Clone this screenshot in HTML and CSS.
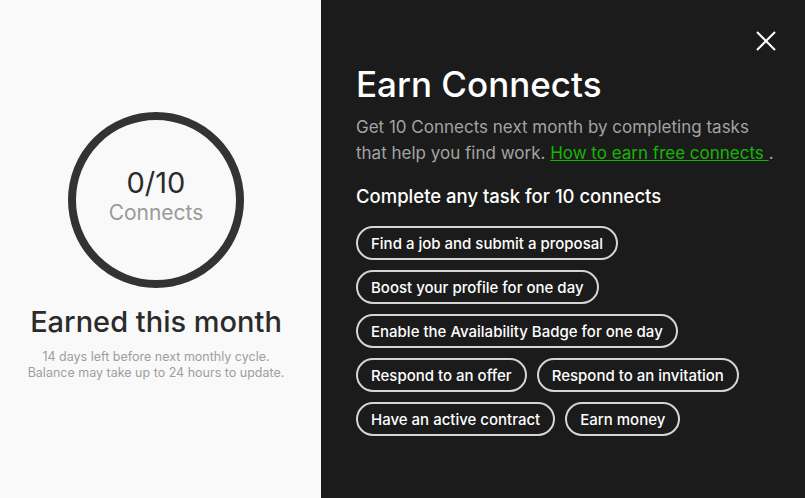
FILE: index.html
```html
<!DOCTYPE html>
<html lang="en">
<head>
<meta charset="utf-8">
<title>Earn Connects</title>
<link rel="stylesheet" href="styles.css">
</head>
<body>
<div class="modal">
  <section class="summary">
    <div class="ring">
      <span class="ring-count">0/10</span>
      <span class="ring-label">Connects</span>
    </div>
    <h2 class="summary-title">Earned this month</h2>
    <p class="summary-note">14 days left before next monthly cycle.<br>Balance may take up to 24 hours to update.</p>
  </section>
  <section class="tasks">
    <button class="close" aria-label="Close">
      <svg width="20" height="20" viewBox="0 0 20 20"><path d="M1 1 L19 19 M19 1 L1 19" stroke="#fff" stroke-width="2" fill="none"/></svg>
    </button>
    <h1 class="tasks-title">Earn Connects</h1>
    <p class="tasks-intro">Get 10 Connects next month by completing tasks that help you find work. <span class="nowrap"><a href="#" class="link">How to earn free connects </a>.</span></p>
    <h3 class="tasks-heading">Complete any task for 10 connects</h3>
    <div class="chips">
      <div class="chip-row"><span class="chip">Find a job and submit a proposal</span></div>
      <div class="chip-row"><span class="chip">Boost your profile for one day</span></div>
      <div class="chip-row"><span class="chip">Enable the Availability Badge for one day</span></div>
      <div class="chip-row"><span class="chip">Respond to an offer</span><span class="chip">Respond to an invitation</span></div>
      <div class="chip-row"><span class="chip">Have an active contract</span><span class="chip">Earn money</span></div>
    </div>
  </section>
</div>
</body>
</html>
```

FILE: styles.css
```css
* { box-sizing: border-box; }
html, body { margin: 0; padding: 0; }
body {
  font-family: Inter, "Liberation Sans", Arial, sans-serif;
  width: 805px;
  height: 498px;
  overflow: hidden;
}
.modal {
  display: flex;
  width: 805px;
  height: 498px;
}
.summary {
  width: 321px;
  flex: none;
  background: #f9f9f9;
  display: flex;
  flex-direction: column;
  align-items: center;
  justify-content: center;
  padding: 0 9px 5px 0;
}
.ring {
  width: 176px;
  height: 176px;
  flex: none;
  border: 8px solid #333333;
  border-radius: 50%;
  display: flex;
  flex-direction: column;
  align-items: center;
  justify-content: center;
  padding-bottom: 7px;
}
.ring-count {
  font-size: 29px;
  line-height: 32px;
  color: #2b2b2b;
  font-weight: 400;
}
.ring-label {
  font-size: 21px;
  line-height: 27px;
  color: #9a9a9a;
}
.summary-title {
  margin: 17px 0 0;
  font-size: 29px;
  line-height: 34px;
  font-weight: 500;
  color: #2b2b2b;
}
.summary-note {
  margin: 10px 0 0;
  font-size: 12.5px;
  line-height: 16px;
  color: #9e9e9e;
  text-align: center;
}
.tasks {
  flex: 1;
  position: relative;
  background: #1b1b1b;
  padding: 64px 20px 0 35px;
  color: #fff;
}
.close {
  position: absolute;
  top: 31px;
  right: 29px;
  width: 20px;
  height: 20px;
  padding: 0;
  border: 0;
  background: none;
  display: flex;
}
.tasks-title {
  margin: 0;
  font-size: 35px;
  line-height: 40px;
  font-weight: 500;
  color: #fff;
}
.tasks-intro {
  margin: 10px 0 0;
  font-size: 17px;
  line-height: 26px;
  color: #a3a3a3;
  max-width: 425px;
}
.nowrap { white-space: nowrap; }
.link {
  color: #14b800;
  text-decoration: underline;
}
.tasks-heading {
  margin: 18px 0 0;
  font-size: 18.5px;
  line-height: 24px;
  font-weight: 500;
  color: #fff;
}
.chips {
  display: flex;
  flex-direction: column;
  align-items: flex-start;
  gap: 10px;
  margin-top: 18px;
}
.chip-row {
  display: flex;
  gap: 10px;
}
.chip {
  height: 34px;
  display: inline-flex;
  align-items: center;
  padding: 0 13px;
  border: 2px solid #d5d5d5;
  border-radius: 17px;
  font-size: 15px;
  font-weight: 500;
  color: #fff;
  white-space: nowrap;
}
```
